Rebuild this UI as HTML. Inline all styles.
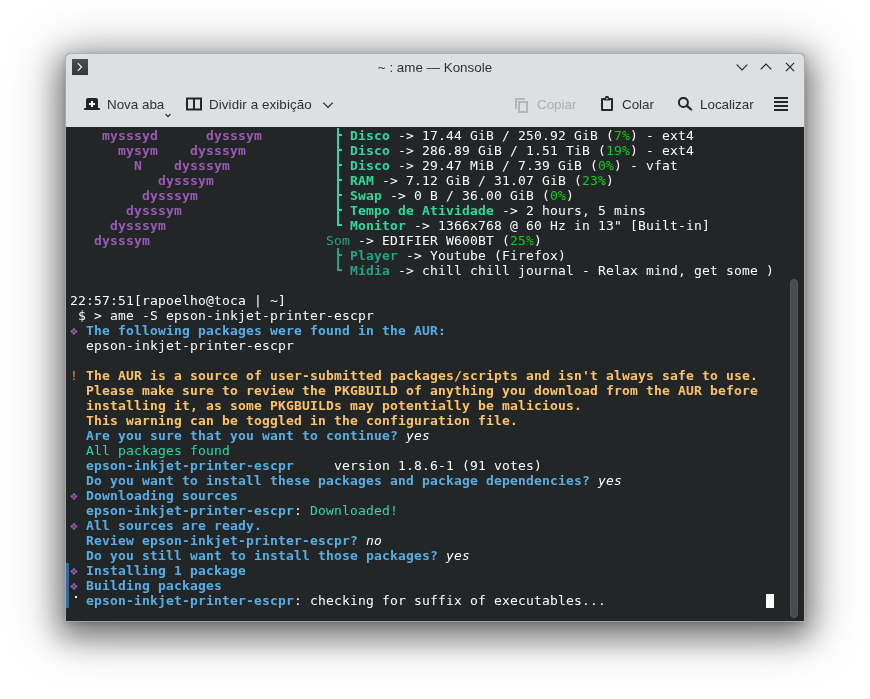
<!DOCTYPE html>
<html lang="pt-BR">
<head>
<meta charset="utf-8">
<title>~ : ame — Konsole</title>
<style>
html,body{margin:0;padding:0;}
body{width:870px;height:699px;background:#fff;position:relative;overflow:hidden;font-family:"Liberation Sans","DejaVu Sans",sans-serif;}
#win{position:absolute;left:66px;top:54px;width:738px;height:567px;background:#232627;border-radius:4px 4px 0 0;
 box-shadow:0 0 0 1px rgba(175,175,175,.75), 0 2px 6px rgba(0,0,0,.18), 0 10px 28px 6px rgba(0,0,0,.40), 0 6px 50px 10px rgba(0,0,0,.28);}
#chrome{position:absolute;left:0;top:0;width:738px;height:73px;background:#dedfe1;border-radius:4px 4px 0 0;}
#appicon{position:absolute;left:6px;top:5px;width:16px;height:16px;}
#title{position:absolute;left:0;top:6px;width:738px;text-align:center;font-size:13.4px;line-height:16px;color:#2e3236;}
.wb{position:absolute;top:0;}
.tb{position:absolute;top:43px;height:16px;font-size:13.4px;line-height:16px;color:#2e3236;white-space:nowrap;}
.tb.dis{color:#acaeb0;}
#term{position:absolute;left:0;top:73px;width:738px;height:494px;overflow:hidden;}
#rows{position:absolute;left:4px;top:1px;font-family:"DejaVu Sans Mono","Liberation Mono",monospace;font-size:13px;letter-spacing:0.1733px;line-height:15px;color:#fcfcfc;}
#rows div{height:15px;white-space:pre;}
#rows,#chrome{will-change:transform;}
b{font-weight:bold;}
.p{color:#9b59b6;}
.g{color:#30d8a0;--c:#30d8a0;}
.t{color:#22a387;--c:#22a387;}
.n{color:#11d116;}
.bl{color:#58aee5;}
.o{color:#fcc468;}
.ex{color:#f0883a;}
.m{color:#9b59b6;}

.bx{display:inline-block;width:8px;height:15px;vertical-align:top;overflow:hidden;color:transparent;background-repeat:no-repeat;}
.bt{background-image:linear-gradient(var(--c),var(--c)),linear-gradient(var(--c),var(--c));background-size:2px 15px,3px 2px;background-position:3px 0,5px 6px;}
.bl2{background-image:linear-gradient(var(--c),var(--c)),linear-gradient(var(--c),var(--c));background-size:2px 8px,5px 2px;background-position:3px 0,3px 6px;}
.dot{--c:#f4f4f4;background-image:linear-gradient(var(--c),var(--c));background-size:2px 2px;background-position:5px 3px;}
i{font-style:italic;}
#cursor{position:absolute;left:700px;top:467px;width:8px;height:14px;background:#fcfcfc;}
#hl{position:absolute;left:0;top:436px;width:3px;height:45px;background:#336a99;}
#sb{position:absolute;left:724px;top:152px;width:8px;height:339px;border-radius:4px;background:#494c4e;border:1px solid #55585a;box-sizing:border-box;}
</style>
</head>
<body>
<div id="win">
 <div id="chrome">
  <svg id="appicon" viewBox="0 0 16 16"><defs><linearGradient id="ig" x1="0" y1="0" x2="0" y2="1"><stop offset="0" stop-color="#474d50"/><stop offset="1" stop-color="#33383b"/></linearGradient></defs><rect width="16" height="16" fill="url(#ig)"/><path d="M5.8 4.2 L9.6 8 L5.8 11.8" fill="none" stroke="#fcfcfc" stroke-width="1.1"/></svg>
  <div id="title">~ : ame — Konsole</div>
  <svg class="wb" style="left:670px;width:12px;height:26px" viewBox="0 0 12 26"><path d="M0.7 10.7 L6 16 L11.3 10.7" fill="none" stroke="#232629" stroke-width="1.2"/></svg>
  <svg class="wb" style="left:694px;width:12px;height:26px" viewBox="0 0 12 26"><path d="M0.7 15.3 L6 10 L11.3 15.3" fill="none" stroke="#232629" stroke-width="1.2"/></svg>
  <svg class="wb" style="left:718px;width:12px;height:26px" viewBox="0 0 12 26"><path d="M1.9 8.9 L10.1 17.1 M10.1 8.9 L1.9 17.1" fill="none" stroke="#232629" stroke-width="1.15"/></svg>

  <svg style="position:absolute;left:18px;top:42px" width="16" height="16" viewBox="0 0 16 16"><path d="M2 4 Q2 2 4 2 H12 Q14 2 14 4 V12 H15.3 Q16 12 16 13 Q16 14 15.3 14 H0.7 Q0 14 0 13 Q0 12 0.7 12 H2 Z" fill="#232629"/><path d="M7 5 H9 V7 H11 V9 H9 V11 H7 V9 H5 V7 H7 Z" fill="#f4f5f5"/></svg>
  <div class="tb" style="left:41px">Nova aba</div>
  <svg style="position:absolute;left:97.5px;top:59px" width="8" height="6" viewBox="0 0 8 6"><path d="M1.6 1.2 L4 3.6 L6.4 1.2" fill="none" stroke="#232629" stroke-width="1.2"/></svg>
  <svg style="position:absolute;left:120px;top:43px" width="16" height="16" viewBox="0 0 16 16"><path d="M1 1.5 H15 V12.5 H1 Z M8 1.5 V12.5" fill="none" stroke="#232629" stroke-width="2"/></svg>
  <div class="tb" style="left:143px;letter-spacing:0.09px">Dividir a exibição</div>
  <svg style="position:absolute;left:256.3px;top:46px" width="12" height="10" viewBox="0 0 12 10"><path d="M1.3 2.6 L6 7.3 L10.7 2.6" fill="none" stroke="#232629" stroke-width="1.2"/></svg>

  <svg style="position:absolute;left:448px;top:43px" width="16" height="16" viewBox="0 0 16 16"><path d="M1 1 H11 V3 H3 V12 H1 Z" fill="#b4b6b8"/><path d="M5 5 H13 V15 H5 Z" fill="none" stroke="#b4b6b8" stroke-width="2"/></svg>
  <div class="tb dis" style="left:471px">Copiar</div>
  <svg style="position:absolute;left:533px;top:42px" width="16" height="17" viewBox="0 0 16 17"><path d="M3 3 H13 V14 H3 Z" fill="none" stroke="#232629" stroke-width="2" stroke-linejoin="round"/><path d="M6.1 1.2 Q6.1 0 7.3 0 H8.7 Q9.9 0 9.9 1.2 L11 4.6 H5 Z" fill="#232629"/><rect x="7.3" y="1.9" width="1.4" height="1.5" fill="#dee0e2"/></svg>
  <div class="tb" style="left:556px">Colar</div>
  <svg style="position:absolute;left:611px;top:43px" width="16" height="16" viewBox="0 0 16 16"><circle cx="6.4" cy="5.4" r="4.5" fill="none" stroke="#232629" stroke-width="2"/><path d="M9.8 8.6 L14.1 12.5" stroke="#232629" stroke-width="2.3" stroke-linecap="round"/></svg>
  <div class="tb" style="left:634px">Localizar</div>
  <svg style="position:absolute;left:708px;top:43px" width="14" height="14" viewBox="0 0 14 14"><path d="M0 1 H14 M0 5 H14 M0 9 H14 M0 13 H14" stroke="#232629" stroke-width="2"/></svg>
 </div>
 <div id="term">
  <div id="hl"></div>
  <div id="rows">
<div>    <b class="p">mysssyd      dysssym</b>         <b class="g"><span class="bx bt">├</span> Disco</b> -&gt; 17.44 GiB / 250.92 GiB (<span class="n">7%</span>) - ext4</div>
<div>      <b class="p">mysym    dysssym</b>           <b class="g"><span class="bx bt">├</span> Disco</b> -&gt; 286.89 GiB / 1.51 TiB (<span class="n">19%</span>) - ext4</div>
<div>        <b class="p">N    dysssym</b>             <b class="g"><span class="bx bt">├</span> Disco</b> -&gt; 29.47 MiB / 7.39 GiB (<span class="n">0%</span>) - vfat</div>
<div>           <b class="p">dysssym</b>               <b class="g"><span class="bx bt">├</span> RAM</b> -&gt; 7.12 GiB / 31.07 GiB (<span class="n">23%</span>)</div>
<div>         <b class="p">dysssym</b>                 <b class="g"><span class="bx bt">├</span> Swap</b> -&gt; 0 B / 36.00 GiB (<span class="n">0%</span>)</div>
<div>       <b class="p">dysssym</b>                   <b class="g"><span class="bx bt">├</span> Tempo de Atividade</b> -&gt; 2 hours, 5 mins</div>
<div>     <b class="p">dysssym</b>                     <b class="g"><span class="bx bl2">└</span> Monitor</b> -&gt; 1366x768 @ 60 Hz in 13" [Built-in]</div>
<div>   <b class="p">dysssym</b>                      <span class="t">Som</span> -&gt; EDIFIER W600BT (<span class="n">25%</span>)</div>
<div>                                 <b class="t"><span class="bx bt">├</span> Player</b> -&gt; Youtube (Firefox)</div>
<div>                                 <b class="t"><span class="bx bl2">└</span> Mídia</b> -&gt; chill chill journal - Relax mind, get some )</div>
<div> </div>
<div>22:57:51[rapoelho@toca | ~]</div>
<div> $ &gt; ame -S epson-inkjet-printer-escpr</div>
<div><span class="m">❖</span> <b class="bl">The following packages were found in the AUR:</b></div>
<div>  epson-inkjet-printer-escpr</div>
<div> </div>
<div><span class="ex">!</span> <b class="o">The AUR is a source of user-submitted packages/scripts and isn't always safe to use.</b></div>
<div>  <b class="o">Please make sure to review the PKGBUILD of anything you download from the AUR before</b></div>
<div>  <b class="o">installing it, as some PKGBUILDs may potentially be malicious.</b></div>
<div>  <b class="o">This warning can be toggled in the configuration file.</b></div>
<div>  <b class="bl">Are you sure that you want to continue?</b> <i>yes</i></div>
<div>  <span class="g">All packages found</span></div>
<div>  <b class="bl">epson-inkjet-printer-escpr</b>     version 1.8.6-1 (91 votes)</div>
<div>  <b class="bl">Do you want to install these packages and package dependencies?</b> <i>yes</i></div>
<div><span class="m">❖</span> <b class="bl">Downloading sources</b></div>
<div>  <b class="bl">epson-inkjet-printer-escpr</b>: <span class="g">Downloaded!</span></div>
<div><span class="m">❖</span> <b class="bl">All sources are ready.</b></div>
<div>  <b class="bl">Review epson-inkjet-printer-escpr?</b> <i>no</i></div>
<div>  <b class="bl">Do you still want to install those packages?</b> <i>yes</i></div>
<div><span class="m">❖</span> <b class="bl">Installing 1 package</b></div>
<div><span class="m">❖</span> <b class="bl">Building packages</b></div>
<div><span class="bx dot">⠈</span> <b class="bl">epson-inkjet-printer-escpr</b>: checking for suffix of executables...</div>
  </div>
  <div id="cursor"></div>
  <div id="sb"></div>
 </div>
</div>
</body>
</html>
